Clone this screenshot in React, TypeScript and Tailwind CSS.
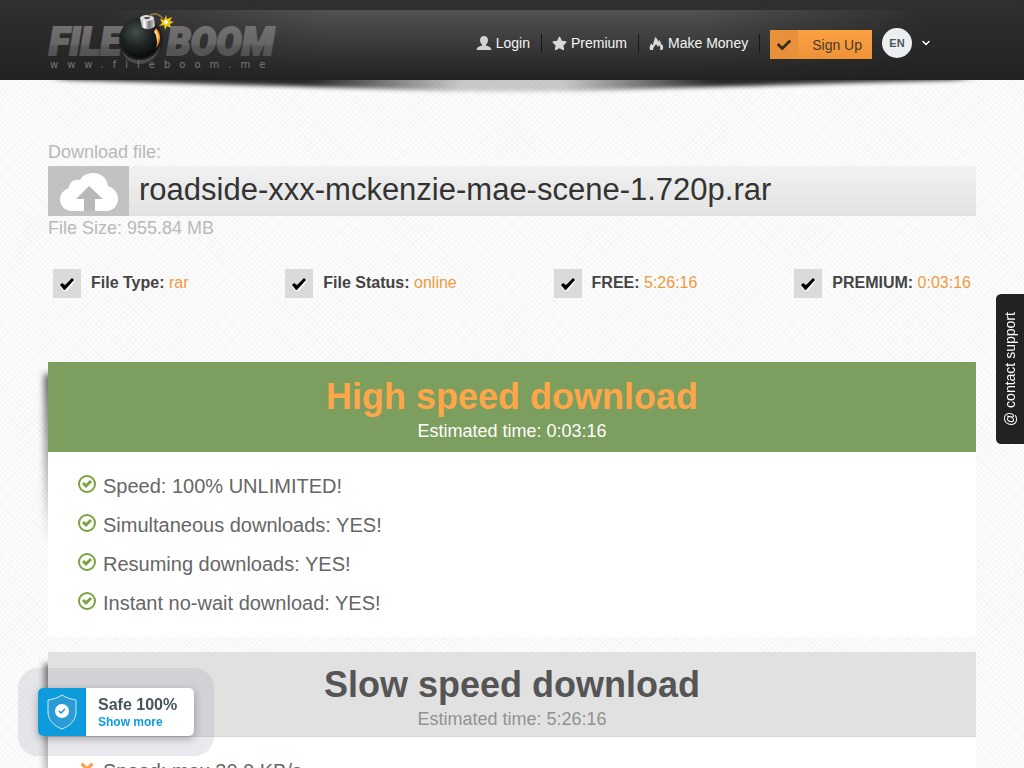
import type { ReactNode } from "react";
import { FaCheck, FaStar, FaTimes } from "react-icons/fa";
import { ChevronDown } from "lucide-react";

const facts = [
  { label: "File Type:", value: "rar" },
  { label: "File Status:", value: "online" },
  { label: "FREE:", value: "5:26:16" },
  { label: "PREMIUM:", value: "0:03:16" },
];

const highSpeed = [
  "Speed: 100% UNLIMITED!",
  "Simultaneous downloads: YES!",
  "Resuming downloads: YES!",
  "Instant no-wait download: YES!",
];

const slowSpeed = ["Speed: max 30.0 KB/s"];

function Logo() {
  return (
    <a href="#" aria-label="FileBoom" className="block">
      <svg width="230" height="64" viewBox="0 0 230 64" className="overflow-visible">
        <defs>
          <linearGradient id="letters" x1="0" y1="0" x2="0" y2="1">
            <stop offset="0" stopColor="#757575" />
            <stop offset="0.55" stopColor="#666666" />
            <stop offset="0.6" stopColor="#585858" />
            <stop offset="1" stopColor="#4f4f4f" />
          </linearGradient>
          <radialGradient id="bomb" cx="0.4" cy="0.35" r="0.7">
            <stop offset="0" stopColor="#46504e" />
            <stop offset="0.5" stopColor="#1f2525" />
            <stop offset="1" stopColor="#060707" />
          </radialGradient>
          <linearGradient id="cap" x1="0" y1="0" x2="1" y2="0">
            <stop offset="0" stopColor="#8d8d8d" />
            <stop offset="0.3" stopColor="#ffffff" />
            <stop offset="0.6" stopColor="#777777" />
            <stop offset="1" stopColor="#d5d5d5" />
          </linearGradient>
        </defs>
        <g
          fontFamily="Roboto, 'Liberation Sans', sans-serif"
          fontWeight="900"
          fontStyle="italic"
          fontSize="38"
          fill="url(#letters)"
          stroke="url(#letters)"
          strokeWidth="2"
        >
          <text x="1" y="47">FILE</text>
          <text x="119" y="47">BOOM</text>
        </g>
        <circle cx="93" cy="32" r="22" fill="#1b1b1b" opacity="0.8" />
        <path d="M74 42c6 14 32 14 38-4-2 20-32 26-38 4z" fill="#4a4a4a" />
        <circle cx="92" cy="30" r="20" fill="url(#bomb)" />
        <path d="M108 20c6 6 5 14 0 20 2-7 2-13-2-17z" fill="#f08a1d" />
        <path d="M108 22c3 4 3 9 1 13 0-5-1-9-3-11z" fill="#ffd98a" />
        <path d="M92 11l14-1 1 8c-3 4-10 4-13 1z" fill="url(#cap)" />
        <ellipse cx="99" cy="10" rx="7" ry="3" fill="#dedede" />
        <ellipse cx="99" cy="10" rx="3" ry="1" fill="#444" />
        <path d="M101 8c4-3 10-3 14 3" fill="none" stroke="#8d7040" strokeWidth="2" />
        <path d="M118 7l1 4 5-2-2 4 4 1-4 2 1 4-4-2-2 4-1-5-5 1 3-3-2-4 4 1z" fill="#f2c51c" />
        <circle cx="118" cy="14" r="2" fill="#fffbe0" />
        <text
          x="2"
          y="60"
          fill="#777"
          fontSize="10"
          fontFamily="'DejaVu Sans', sans-serif"
          className="tracking-[9px]"
        >
          www.fileboom.me
        </text>
      </svg>
    </a>
  );
}

function UserIcon() {
  return (
    <svg width="16" height="14" viewBox="0 0 16 14" fill="#d2d2d2">
      <path d="M8 0c2.600 0 4 1.700 4 4 0 2-1 3.500-2 4.500v1c2 .700 5 1.300 5.500 4.500H.5C1 10.800 4 10.200 6 9.500v-1C5 7.500 4 6 4 4c0-2.300 1.400-4 4-4z" />
    </svg>
  );
}

function FlameIcon() {
  return (
    <svg width="15" height="15" viewBox="0 0 15 15" fill="#dcdcdc">
      <path d="M1 14C0 11 1 9 3 7v2l1 0C4 6 6 4 6 1c2 1 3 3 3 5l1-2c2 2 2 3 2 5l1-1c1 2 2 4 0 6h-2c1-2 0-4-1-5l-1 2c-1-1-1-2-2-3-1 2-3 3-3 6z" />
    </svg>
  );
}

function CheckBadge() {
  return (
    <svg width="16" height="14" viewBox="0 0 16 14">
      <path d="M1 10l3-3 3 3 6-8 3 2-9 11H6z" fill="#fff" />
      <path d="M1 8l2-2 3 2 7-7 2 2-9 10H5z" fill="#000" />
    </svg>
  );
}

function CircleCheck() {
  return (
    <svg width="18" height="18" viewBox="0 0 18 18" fill="none" stroke="#7ba23f">
      <circle cx="9" cy="9" r="8" strokeWidth="2" />
      <path d="M5 8l3 3 5-5" strokeWidth="3" />
    </svg>
  );
}

function NavLink({ icon, children }: { icon: ReactNode; children: ReactNode }) {
  return (
    <>
      <a href="#" className="flex items-center gap-1 text-sm text-[#f5f5f5]">
        {icon}
        {children}
      </a>
      <span className="mr-[10px] ml-[11px] h-[18px] w-px bg-[#151515]" />
    </>
  );
}

function Header() {
  return (
    <header className="relative z-10 h-20 bg-linear-to-b from-[#303030] to-[#222]">
      {/* spotlight and the curled shadow under the bar */}
      <div className="absolute inset-x-0 top-[10px] bottom-0 bg-linear-to-b from-[#525252] to-[#222] [mask-image:linear-gradient(to_right,transparent_9%,black_32%,black_68%,transparent_91%)]" />
      <svg
        className="absolute top-full left-0 h-6 w-full"
        viewBox="0 0 1024 24"
        preserveAspectRatio="none"
      >
        <defs>
          <linearGradient id="curl" gradientUnits="userSpaceOnUse" x1="0" y1="0" x2="1024" y2="0">
            <stop offset="0" stopColor="#000" stopOpacity="0.7" />
            <stop offset="0.3" stopColor="#000" stopOpacity="0.85" />
            <stop offset="0.45" stopColor="#000" stopOpacity="0.2" />
            <stop offset="0.55" stopColor="#000" stopOpacity="0.2" />
            <stop offset="0.7" stopColor="#000" stopOpacity="0.85" />
            <stop offset="1" stopColor="#000" stopOpacity="0.7" />
          </linearGradient>
          <filter id="soft" x="-5%" y="-100%" width="110%" height="300%">
            <feGaussianBlur stdDeviation="8 2" />
          </filter>
        </defs>
        <path
          d="M60-12H964V0Q740 6 640 9Q512 14 384 9Q284 6 60 0z"
          fill="url(#curl)"
          filter="url(#soft)"
        />
      </svg>
      <div className="relative flex items-start justify-between px-12 pt-2">
        <Logo />
        <nav className="mr-11 flex h-[70px] items-center">
          <NavLink icon={<UserIcon />}>Login</NavLink>
          <NavLink icon={<FaStar size={15} color="#d8d8d8" />}>Premium</NavLink>
          <NavLink icon={<FlameIcon />}>Make Money</NavLink>
          <a
            href="#"
            className="mt-[3px] flex h-[29px] items-center bg-linear-to-b from-[#fba144] to-[#ee9236] text-sm text-[#4a3824]"
          >
            <span className="flex h-full w-7 items-center justify-center bg-[#e8903a]">
              <FaCheck size={14} color="#3a2c1c" />
            </span>
            <span className="pr-[10px] pl-[14px]">Sign Up</span>
          </a>
          <button type="button" className="ml-[10px] flex items-center gap-2 text-white">
            <span className="flex size-[30px] items-center justify-center rounded-full bg-[#eceff0] text-[11px] font-bold text-[#48565a]">
              EN
            </span>
            <ChevronDown size={12} strokeWidth={3} />
          </button>
        </nav>
      </div>
    </header>
  );
}

function FileInfo() {
  return (
    <section className="pt-[60px]">
      <p className="mb-[2px] text-lg leading-6 text-[#b9b9b9]">Download file:</p>
      <div className="flex h-[50px] bg-linear-to-b from-[#f1f1f1] to-[#e2e2e2]">
        <div className="flex w-[81px] items-end justify-center bg-[#c2c2c2] pb-[5px]">
          <svg width="58" height="38" viewBox="0 0 58 38">
            <path
              d="M12 38C5 38 0 33 0 26c0-5 4-9 9-11 0-6 5-9 11-8C23 2 28 0 33 0c8 0 14 5 15 13 6 2 10 7 10 13 0 7-5 12-12 12z"
              fill="#fff"
            />
            <path d="M29 13l14 13h-8v12H24V26h-8z" fill="#b8b8b8" />
          </svg>
        </div>
        <h1 className="truncate pl-[10px] text-[31px] leading-[48px] text-[#333]">
          roadside-xxx-mckenzie-mae-scene-1.720p.rar
        </h1>
      </div>
      <p className="text-lg leading-6 text-[#b9b9b9]">File Size: 955.84 MB</p>
      <ul className="mt-[29px] flex justify-between px-[5px]">
        {facts.map((f) => (
          <li key={f.label} className="flex gap-[10px]">
            <span className="flex h-[29px] w-7 items-center justify-center bg-[#dadada]">
              <CheckBadge />
            </span>
            <span className="text-base leading-7 text-[#ee9a40]">
              <b className="text-[#444]">{f.label}</b> {f.value}
            </span>
          </li>
        ))}
      </ul>
    </section>
  );
}

interface SpeedCardProps {
  title: string;
  time: string;
  items: string[];
  icon: ReactNode;
  headClass: string;
  titleClass: string;
}

function SpeedCard({ title, time, items, icon, headClass, titleClass }: SpeedCardProps) {
  return (
    <section className="relative">
      <div className="absolute top-3 -left-1 h-[170px] w-5 bg-linear-to-b from-black/60 to-transparent blur-[3px]" />
      <div className="relative bg-white">
        <div className={`text-center ${headClass}`}>
          <h2 className={`text-4xl leading-10 font-bold ${titleClass}`}>{title}</h2>
          <p className="text-lg leading-7">Estimated time: {time}</p>
        </div>
        <ul className="px-[30px] pt-[14px] pb-[15px] text-xl text-[#666]">
          {items.map((item) => (
            <li key={item} className="flex h-[39px] items-center gap-[7px]">
              <span className="flex w-[18px] justify-center pb-1">{icon}</span>
              {item}
            </li>
          ))}
        </ul>
      </div>
    </section>
  );
}

function SafeBadge() {
  return (
    <div className="fixed bottom-3 left-[18px] z-20 rounded-[20px] bg-[#9696aa]/20 p-5">
      <button
        type="button"
        className="flex h-12 overflow-hidden rounded-[5px] bg-white text-left shadow-[0_3px_8px_rgba(0,0,0,0.3)]"
      >
        <span className="flex h-full w-12 items-center justify-center bg-[#0c9cdc]">
          <svg width="32" height="38" viewBox="0 0 32 38">
            <path
              d="M16 2c4 3 9 4 14 5v12c0 8-6 14-14 17C8 33 2 27 2 19V7c5-1 10-2 14-5z"
              fill="#2b9bd5"
              stroke="#c9eaf8"
            />
            <circle cx="16" cy="18" r="7" fill="#fff" />
            <path d="M13 18l2 2 4-4" fill="none" stroke="#168fcb" strokeWidth="1.500" />
          </svg>
        </span>
        <span className="flex h-full w-[108px] flex-col justify-center pt-px pl-3 font-bold whitespace-nowrap">
          <span className="text-base leading-[18px] text-[#46555a]">Safe 100%</span>
          <span className="text-xs leading-4 text-[#109bdc]">Show more</span>
        </span>
      </button>
    </div>
  );
}

export default function App() {
  return (
    <div className="min-h-screen bg-[#fcfcfc] bg-[repeating-linear-gradient(45deg,rgba(0,0,0,0.02)_0_1px,transparent_1px_4px),repeating-linear-gradient(-45deg,rgba(0,0,0,0.02)_0_1px,transparent_1px_4px)] font-['Liberation_Sans',Arial,sans-serif]">
      <Header />
      <main className="px-12">
        <FileInfo />
        <div className="mt-16 flex flex-col gap-[15px]">
          <SpeedCard
            title="High speed download"
            time="0:03:16"
            items={highSpeed}
            icon={<CircleCheck />}
            headClass="h-[90px] bg-[#7c9e5e] pt-[15px] text-white"
            titleClass="text-[#ffa64a]"
          />
          <SpeedCard
            title="Slow speed download"
            time="5:26:16"
            items={slowSpeed}
            icon={<FaTimes size={18} color="#ffa04d" />}
            headClass="h-[85px] border-b border-[#d6d6d6] bg-[#e1e1e1] pt-[13px] text-[#919191]"
            titleClass="text-[#555]"
          />
        </div>
      </main>
      <SafeBadge />
      <a
        href="#"
        className="fixed top-[294px] right-0 z-20 flex h-[150px] w-7 rotate-180 items-center justify-center rounded-r-[5px] bg-[#222] text-sm text-white [writing-mode:vertical-rl]"
      >
        @ contact support
      </a>
    </div>
  );
}
